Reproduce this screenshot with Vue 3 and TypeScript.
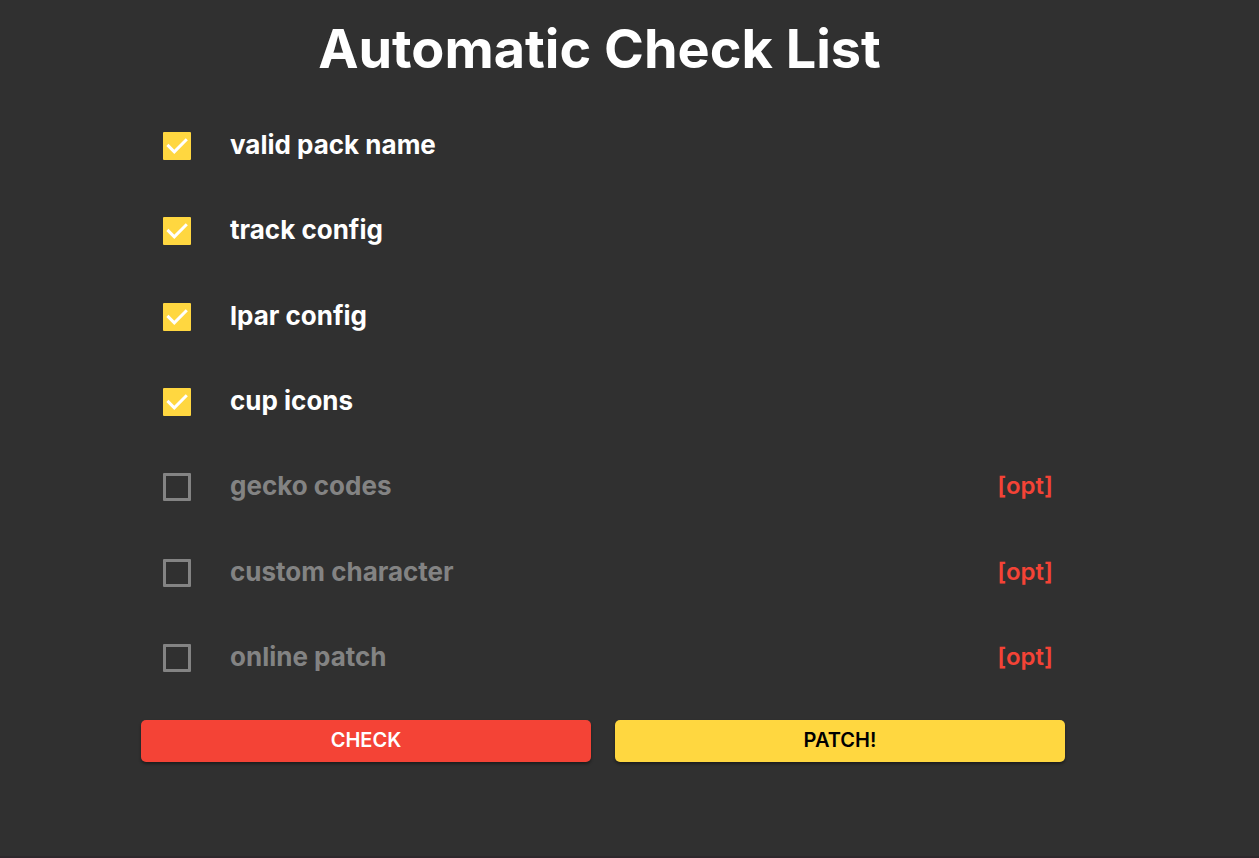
<script setup lang="ts">
import { ref } from 'vue'

interface CheckItem {
  id: string
  label: string
  checked: boolean
  optional: boolean
}

const items = ref<CheckItem[]>([
  { id: 'pack-name', label: 'valid pack name', checked: true, optional: false },
  { id: 'track-config', label: 'track config', checked: true, optional: false },
  { id: 'lpar-config', label: 'lpar config', checked: true, optional: false },
  { id: 'cup-icons', label: 'cup icons', checked: true, optional: false },
  { id: 'gecko-codes', label: 'gecko codes', checked: false, optional: true },
  { id: 'custom-character', label: 'custom character', checked: false, optional: true },
  { id: 'online-patch', label: 'online patch', checked: false, optional: true },
])
</script>

<template>
  <main class="page">
    <h1 class="title">Automatic Check List</h1>
    <section class="panel">
      <ul class="list">
        <li v-for="item in items" :key="item.id" class="row">
          <span class="box">
            <input :id="item.id" v-model="item.checked" class="tick" type="checkbox" />
            <svg v-if="item.checked" class="mark" viewBox="0 0 28 28" aria-hidden="true">
              <path d="M4.4 12.9 L11.3 19.8 L23.8 7.3" />
            </svg>
          </span>
          <label :for="item.id" class="label" :class="{ off: !item.checked }">{{ item.label }}</label>
          <span v-if="item.optional" class="opt">[opt]</span>
        </li>
      </ul>
      <div class="actions">
        <button class="btn check" type="button">CHECK</button>
        <button class="btn patch" type="button">PATCH!</button>
      </div>
    </section>
  </main>
</template>

<style>
body {
  background: #303030;
}
</style>

<style scoped>
.page {
  box-sizing: border-box;
  min-height: 100vh;
  padding: 16px 60px 0 0;
  background: #303030;
  border-bottom: 2px solid #2d282c;
  color: #fff;
  font-family: Inter, "Liberation Sans", sans-serif;
}
.title {
  margin: 0;
  text-align: center;
  font-size: 54px;
  line-height: 66px;
  font-weight: 700;
}
.panel {
  margin: 21px 134px 0 141px;
}
.list {
  display: grid;
  grid-auto-rows: 1fr;
  height: 598px;
  margin: 0;
  padding: 0 12px 0 22px;
  list-style: none;
}
.row {
  display: flex;
  align-items: center;
}
.box {
  display: grid;
  flex: none;
  width: 28px;
  height: 28px;
  margin-right: 39px;
}
.tick {
  grid-area: 1 / 1;
  appearance: none;
  box-sizing: border-box;
  width: 28px;
  height: 28px;
  margin: 0;
  border: 3px solid #838383;
  border-radius: 1px;
}
.tick:checked {
  border-color: #ffd740;
  background: #ffd740;
}
.mark {
  grid-area: 1 / 1;
  width: 28px;
  height: 28px;
  pointer-events: none;
}
.mark path {
  fill: none;
  stroke: #fff;
  stroke-width: 3;
}
.label {
  flex: 1;
  padding-bottom: 2px;
  font-size: 26px;
  line-height: 32px;
  font-weight: 700;
}
.off {
  color: #838383;
}
.opt {
  padding-bottom: 2px;
  color: #f44336;
  font-size: 24px;
  line-height: 32px;
  font-weight: 600;
}
.actions {
  display: grid;
  grid-template-columns: 1fr 1fr;
  gap: 24px;
  margin-top: 19px;
}
.btn {
  height: 42px;
  padding: 0 0 2px;
  border: 0;
  border-radius: 5px;
  box-shadow: 0 2px 3px rgba(0, 0, 0, 0.4);
  font-family: inherit;
  font-size: 20px;
  font-weight: 600;
}
.check {
  background: #f44336;
  color: #fff;
}
.patch {
  background: #ffd740;
  color: #000;
}
</style>
